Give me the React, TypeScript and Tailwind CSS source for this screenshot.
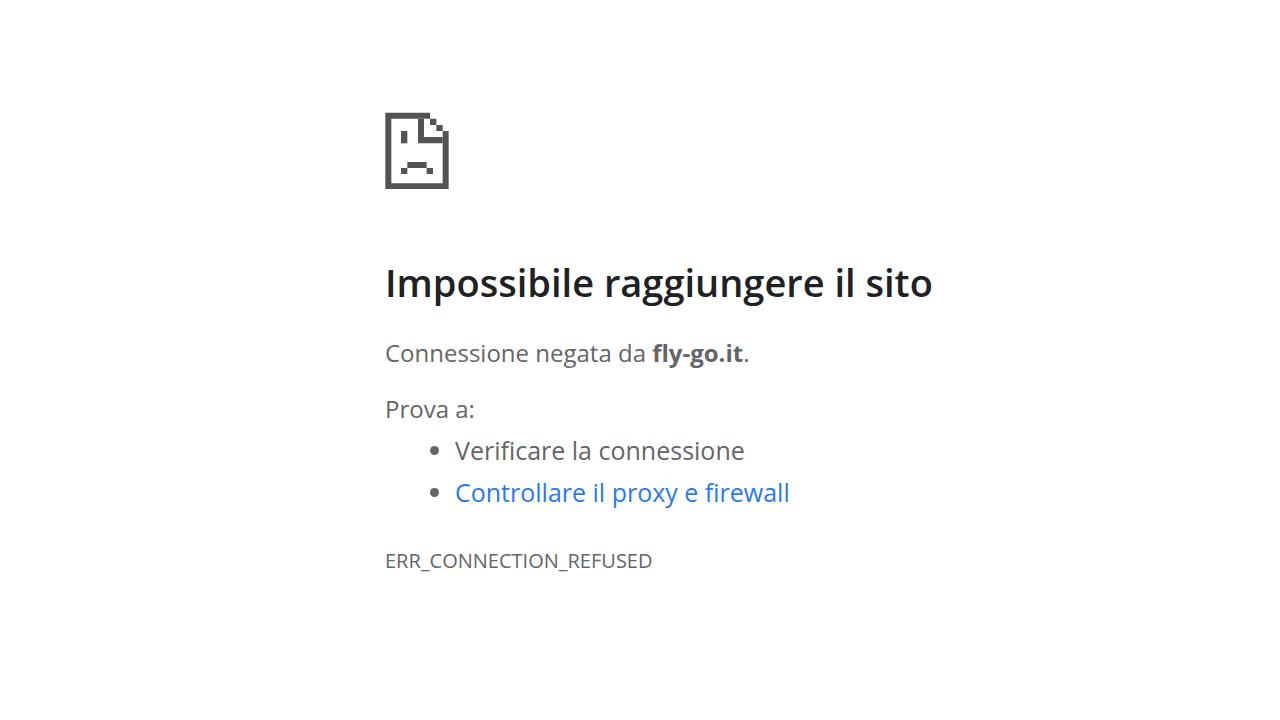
interface NetErrorProps {
  host: string;
  code: string;
}

function SadPageIcon() {
  return (
    <svg viewBox="-1 -2 192 231" className="block w-16 h-[77px]" fill="#535353" aria-hidden="true">
      {/* page outline */}
      <path d="M0 0H134V18H18V212H172V55H190V230H0Z" />
      {/* folded corner */}
      <path d="M98 18H116V73H172V92H98Z" />
      <path d="M134 18H153V37H134ZM153 37H172V55H153Z" />
      {/* face */}
      <path d="M47 55H66V92H47Z" />
      <path d="M66 148H124V166H66ZM47 166H66V184H47ZM124 166H143V184H124Z" />
    </svg>
  );
}

function NetError({ host, code }: NetErrorProps) {
  return (
    <main className="pl-[30%] pr-4 pt-28 pb-16">
      <div className="pl-px">
        <SadPageIcon />
        <h1 className="mt-16 text-[38px] leading-[58px] font-semibold text-[#202124]">
          Impossibile raggiungere il sito
        </h1>
        <p className="mt-6 text-2xl leading-9">
          Connessione negata da <strong className="font-bold">{host}</strong>.
        </p>
        <p className="mt-5 text-2xl leading-9">Prova a:</p>
        <ul className="mt-0.5 list-disc pl-[70px] text-[25px] leading-[42px]">
          <li>Verificare la connessione</li>
          <li>
            <a href="#proxy" className="text-[#2a7ae9] hover:underline">
              Controllare il proxy e firewall
            </a>
          </li>
        </ul>
        <p className="mt-8 text-[20px] leading-8">{code}</p>
      </div>
    </main>
  );
}

export default function App() {
  return (
    <div className="min-h-screen bg-white text-[#646569] font-['Segoe_UI','Open_Sans','Noto_Sans',sans-serif]">
      <NetError host="fly-go.it" code="ERR_CONNECTION_REFUSED" />
    </div>
  );
}
